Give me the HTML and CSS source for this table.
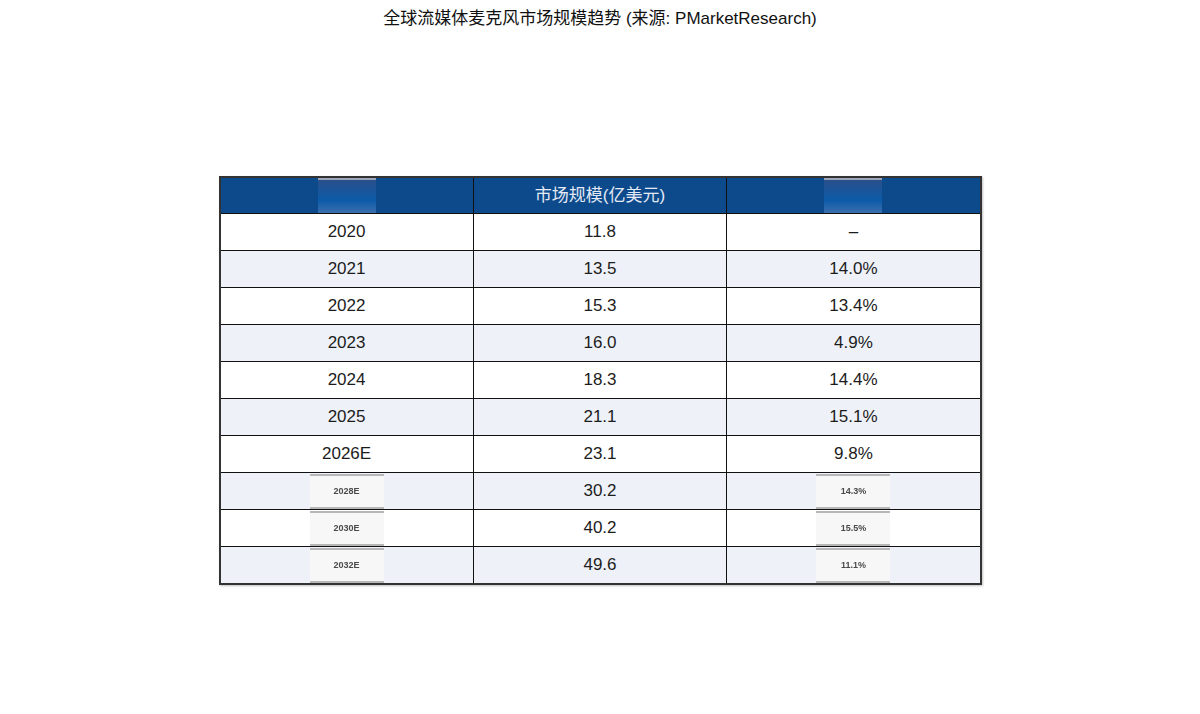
FILE: index.html
```html
<!DOCTYPE html>
<html lang="zh">
<head>
<meta charset="utf-8">
<title>全球流媒体麦克风市场规模趋势</title>
<link rel="stylesheet" href="styles.css">
</head>
<body>
<div class="page">
  <h1 class="title">全球流媒体麦克风市场规模趋势 (来源: PMarketResearch)</h1>
  <table class="grid">
    <thead>
      <tr>
        <th><span class="hmask">年份</span></th>
        <th>市场规模(亿美元)</th>
        <th><span class="hmask">增长率</span></th>
      </tr>
    </thead>
    <tbody>
      <tr><td>2020</td><td>11.8</td><td>–</td></tr>
      <tr class="alt"><td>2021</td><td>13.5</td><td>14.0%</td></tr>
      <tr><td>2022</td><td>15.3</td><td>13.4%</td></tr>
      <tr class="alt"><td>2023</td><td>16.0</td><td>4.9%</td></tr>
      <tr><td>2024</td><td>18.3</td><td>14.4%</td></tr>
      <tr class="alt"><td>2025</td><td>21.1</td><td>15.1%</td></tr>
      <tr><td>2026E</td><td>23.1</td><td>9.8%</td></tr>
      <tr class="alt"><td><span class="mask">2028E</span></td><td>30.2</td><td><span class="mask">14.3%</span></td></tr>
      <tr><td><span class="mask">2030E</span></td><td>40.2</td><td><span class="mask">15.5%</span></td></tr>
      <tr class="alt"><td><span class="mask">2032E</span></td><td>49.6</td><td><span class="mask">11.1%</span></td></tr>
    </tbody>
  </table>
</div>
</body>
</html>
```
FILE: styles.css
```css
html, body {
  margin: 0;
  padding: 0;
  background: #ffffff;
}
.page {
  width: 1200px;
  height: 714px;
  display: flex;
  flex-direction: column;
  align-items: center;
  font-family: "Liberation Sans", "Noto Sans CJK SC", sans-serif;
  color: #1a1a1a;
}
.title {
  margin: 8px 0 0 0;
  font-size: 17px;
  font-weight: normal;
  line-height: 22px;
  color: #111;
}
.grid {
  margin-top: 146px;
  width: 763px;
  border-collapse: collapse;
  table-layout: fixed;
  border: 2px solid #333;
  box-shadow: 1px 1px 2px rgba(0,0,0,0.25);
}
.grid th, .grid td {
  height: 36px;
  padding: 0;
  text-align: center;
  vertical-align: middle;
  border: 1.5px solid #111;
  font-size: 17px;
  line-height: 20px;
}
.grid th {
  background: #0d4a8c;
  color: #e3eaf5;
  font-weight: normal;
  height: 35px;
}
.grid td {
  background: #ffffff;
  color: #1c1c1c;
}
.grid tr.alt td {
  background: #eef2f8;
}
.hmask {
  display: inline-block;
  width: 58px;
  height: 33px;
  line-height: 33px;
  background: linear-gradient(#2a4f8a, #0b5aa8 60%, #3b6fae);
  color: transparent;
  filter: blur(0.6px);
  border-top: 2px solid #9aa6b8;
  vertical-align: middle;
}
.mask {
  display: inline-block;
  width: 74px;
  height: 31px;
  line-height: 31px;
  background: #f7f7f7;
  border-top: 2px solid #b7b7b7;
  border-bottom: 2px solid #b7b7b7;
  font-size: 9px;
  font-weight: bold;
  color: #4a4a4a;
  filter: blur(0.5px);
  vertical-align: middle;
}
```
